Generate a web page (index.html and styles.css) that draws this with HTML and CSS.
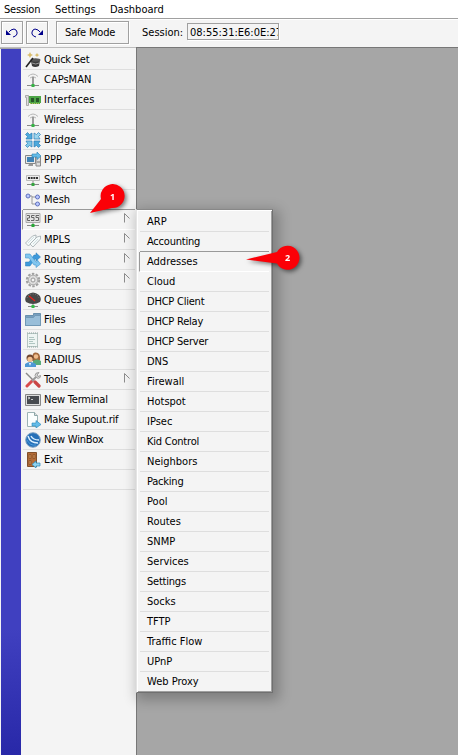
FILE: index.html
```
<!DOCTYPE html>
<html lang="en">
<head>
<meta charset="utf-8">
<title>WinBox</title>
<link rel="stylesheet" href="styles.css">
</head>
<body>
<nav class="menubar"><span class="m1 tight">Session</span><span class="m2">Settings</span><span class="m3">Dashboard</span></nav>
<header class="toolbar">
  <button class="btn sq"><svg width="12" height="10" viewBox="0 0 12 10"><path d="M0 2v5h5z" fill="#00008b"/><path d="M3 4l2-2 3-1 2 1 1 2v2L9.500 8 7 9" class="arrow"/></svg></button>
  <button class="btn sq"><svg class="flip" width="12" height="10" viewBox="0 0 12 10"><path d="M0 2v5h5z" fill="#00008b"/><path d="M3 4l2-2 3-1 2 1 1 2v2L9.500 8 7 9" class="arrow"/></svg></button>
  <button class="btn safe tight">Safe Mode</button>
  <label class="lbl">Session:</label>
  <div class="field">08:55:31:E6:0E:27</div>
</header>
<main class="work">
  <div class="rail"></div>
  <ul class="side">
    <li><svg class="ic" viewBox="0 0 16 16"><path d="M6 9l9-1-1 6q-4 2-7 0z" fill="#3a3a3a"/><ellipse cx="10.500" cy="8" rx="5" ry="1.700" fill="#555"/><path d="M7 11q4 2 7 0" stroke="#999" fill="none"/><path d="M1 15l7-9" stroke="#222" stroke-width="1.600"/><path d="M5 0l1 2 2 1-2 1-1 2-1-2-2-1 2-1zM12 1l1 1.500 1.500.5-1.500.7-1 1.300-1-1.300L9.500 3l1.500-.5z" fill="#d9bd6c"/></svg><span class="tight">Quick Set</span></li>
    <li><svg class="ic" viewBox="0 0 16 16"><use href="#antenna"/></svg><span>CAPsMAN</span></li>
    <li><svg class="ic" viewBox="0 0 16 16"><path d="M.5 3.500h3v10h-2v-8h-1z" fill="#ddd" stroke="#999" stroke-width=".8"/><path d="M4 4h12v7h-1v1H5v-1H4z" fill="#4ea647"/><path d="M6 6h3v4H6zM11 6h3v4h-3z" fill="#28572a"/><path d="M5 11.500h10" stroke="#b9bd5b" stroke-dasharray="1 1"/></svg><span class="wide">Interfaces</span></li>
    <li><svg class="ic" viewBox="0 0 16 16"><use href="#antenna"/></svg><span class="tight">Wireless</span></li>
    <li><svg class="ic" viewBox="0 0 16 16"><g stroke="#2c7cb4" stroke-width=".7" fill="#4da9dc"><path d="M.5 2.500l2-2 2 2L7 1v6H1l1.500-2.500z"/><path d="M15.500 2.500l-2-2-2 2L9 1v6h6l-1.500-2.500z" fill="#9bd6ef"/><path d="M.5 13.500l2 2 2-2L7 15V9H1l1.500 2.500z" fill="#7fc7e8"/><path d="M15.500 13.500l-2 2-2-2L9 15V9h6l-1.500 2.500z"/></g></svg><span>Bridge</span></li>
    <li><svg class="ic" viewBox="0 0 16 16"><path d="M11 4.500h4.500v9.500H11z" fill="#ddd" stroke="#888"/><path d="M.5 3.500h10v8H.5z" fill="#e8e8e8" stroke="#888"/><path d="M2 5h7v5H2z" fill="#3e82b5"/><path d="M4 12h4v2H3z" fill="#999"/><path d="M7 2h5V0l4 4-4 3.500V5H7z" fill="#65bce8" stroke="#2380b4" stroke-width=".6"/><path d="M12 10h3" stroke="#777"/></svg><span>PPP</span></li>
    <li><svg class="ic" viewBox="0 0 16 16"><path d="M1.500 3.500h13v5h-13z" fill="#eee" stroke="#bbb"/><path d="M3 6h10" stroke="#333" stroke-width="2" stroke-dasharray="2 .67"/><path d="M8 9v3M2 12.500h12" stroke="#888"/><path d="M6.500 11h3v3h-3z" fill="#35a540"/></svg><span>Switch</span></li>
    <li><svg class="ic" viewBox="0 0 16 16"><path d="M5 4h2v8h4M7 5h4" stroke="#999" fill="none"/><g fill="#bac9ff" stroke="#6070bd"><circle cx="3" cy="4" r="2"/><circle cx="12.500" cy="5" r="2"/><circle cx="12.500" cy="12" r="2"/></g></svg><span>Mesh</span></li>
    <li class="active"><svg class="ic" viewBox="0 0 16 16"><path d="M1 1.500h14v9H1z" fill="#e4e4e4" stroke="#aaa"/><path d="M2 3.500h2.500V6h-2v2.500H5M9.500 3.500h-3v2h2.500v3H6M14 3.500h-3v2h2.500v3h-3" fill="none" stroke="#666"/><path d="M8 11v2M2 13.500h12" stroke="#888"/><path d="M6.500 12h3v3h-3z" fill="#27a936"/></svg><span>IP</span><svg class="sub"><use href="#tri"/></svg></li>
    <li><svg class="ic" viewBox="0 0 16 16"><g fill="#f5fafa" stroke="#9faaad" stroke-width=".8"><path d="M.5 11l7-7 3.500-1v3l-7.500 8z"/><path d="M5 12l7-7 3.500-1v3L8 15z"/></g><path d="M3 11l6-6M8 12l5-5" stroke="#d0dfe2"/></svg><span>MPLS</span><svg class="sub"><use href="#tri"/></svg></li>
    <li><svg class="ic" viewBox="0 0 16 16"><path d="M.5 10H4l5-7h2V.8L15.500 5 11 9V7h-1l-5 7H.5z" fill="#3e99da" stroke="#2478b4" stroke-width=".5"/><path d="M.5 2H5l6 8h1V7.500l3.500 4.500-4.500 3.500V13H9L4 6H.5z" fill="#82c6ef" stroke="#3f94cc" stroke-width=".6"/></svg><span>Routing</span><svg class="sub"><use href="#tri"/></svg></li>
    <li><svg class="ic" viewBox="0 0 16 16"><circle cx="8" cy="8" r="6.200" fill="none" stroke="#a0a0a0" stroke-width="2" stroke-dasharray="2.500 1.400"/><circle cx="8" cy="8" r="4.800" fill="#ddd" stroke="#aaa"/><circle cx="8" cy="8" r="2" fill="#f4f4f4" stroke="#999"/></svg><span>System</span><svg class="sub"><use href="#tri"/></svg></li>
    <li><svg class="ic" viewBox="0 0 16 16"><path d="M1 10Q-1 6 2 3q6-5 12 0 3 3 1 7-7 4-14 0z" fill="#484848"/><path d="M2 6l1-2 3-2h4l3 2 1 2" fill="none" stroke="#777" stroke-dasharray="1 1.500"/><path d="M4 4l6 5" stroke="#e62018" stroke-width="1.200"/><path d="M8 12v2M3 14.500h10" stroke="#888"/><path d="M6.500 13h3v3h-3z" fill="#36bd48"/></svg><span>Queues</span></li>
    <li><svg class="ic" viewBox="0 0 16 16"><path d="M.5 3.500h8v-2h7v12H.5z" fill="#779fc0" stroke="#6990ad"/><path d="M.5 5.500h8l1.500-2h5.500v10H.5z" fill="#99bed9" stroke="#7198b5"/></svg><span>Files</span></li>
    <li><svg class="ic" viewBox="0 0 16 16"><path d="M2.500 1.500h10v13h-10z" fill="#eef5f3" stroke="#b5c5c2"/><path d="M2 1h11M2 15h11" stroke="#90a5a1" stroke-dasharray="1 1"/><path d="M4 5.500h5M4 7.500h6M4 9.500h4M4 11.500h6" stroke="#afc5c1"/></svg><span>Log</span></li>
    <li><svg class="ic" viewBox="0 0 16 16"><path d="M8 10Q6 1 10 .5q6-.5 5 8z" fill="#a3693e"/><path d="M8 13V9q4-3 8 0v4z" fill="#58ac7a"/><circle cx="11" cy="4.500" r="2.200" fill="#f0bd8d"/><circle cx="5" cy="6" r="3.500" fill="#704731"/><circle cx="5" cy="7.300" r="2.600" fill="#f2bf91"/><path d="M0 15v-3q5-4 11 0v3z" fill="#4e98d5"/><path d="M4 11l1 3 1-3" fill="#fff"/></svg><span>RADIUS</span></li>
    <li><svg class="ic" viewBox="0 0 16 16"><path d="M1 1l8 8" stroke="#888" stroke-width="1.500"/><path d="M10 10l4 4" stroke="#c94444" stroke-width="3.200" stroke-linecap="round"/><path d="M2 14l5-5" stroke="#d94b4b" stroke-width="3" stroke-linecap="round"/><path d="M7 9l4-4" stroke="#999" stroke-width="2"/><path d="M10 3.500Q10 .5 14 .5l-2 2.500 1 1.500 2.500-1Q15.500 7 12 6z" fill="#ddd" stroke="#888" stroke-width=".8"/></svg><span>Tools</span><svg class="sub"><use href="#tri"/></svg></li>
    <li><svg class="ic" viewBox="0 0 16 16"><path d="M.5 2.500h15v11H.5z" fill="#ddd" stroke="#888"/><path d="M2 4h12v8H2z" fill="#484b50"/><path d="M3 5l2 1-2 1M6 7.500h2" stroke="#eee" stroke-width=".8" fill="none"/></svg><span class="tight">New Terminal</span></li>
    <li><svg class="ic" viewBox="0 0 16 16"><path d="M2.500.5h7l3 3v11h-10z" fill="#fbfefe" stroke="#9cb3b5"/><path d="M9.500.5v3h3" fill="#ddd" stroke="#8ba5a7"/><path d="M7 11h4V8.500l5 4-5 3.500v-2H7z" fill="#65bde9" stroke="#2587bb" stroke-width=".6"/></svg><span class="tight">Make Supout.rif</span></li>
    <li><svg class="ic" viewBox="0 0 16 16"><circle cx="8" cy="8" r="7.300" fill="#2670b8" stroke="#7ca1c4"/><path d="M3 4q2 7 10 7M6 4q2 4 8 4" fill="none" stroke="#dcf0ff" stroke-width="1.400"/><path d="M2 8q3 6 9 5" stroke="#4b9cdd" fill="none"/></svg><span class="tight">New WinBox</span></li>
    <li><svg class="ic" viewBox="0 0 16 16"><path d="M2.500.5h9v14h-9z" fill="#b36b38" stroke="#81502b"/><path d="M4 2.500h2v4H4zM8 2.500h2v4H8zM4 8.500h2v4H4z" fill="#c98c57" stroke="#8c5429" stroke-width=".8"/><path d="M15 11h-4V9l-4 3.500 4 3.500v-2h4z" fill="#8ed2ef" stroke="#2587bb" stroke-width=".7"/></svg><span>Exit</span></li>
    <li></li>
  </ul>
  <ul class="popup">
    <li>ARP</li><li class="tight">Accounting</li><li class="hot">Addresses</li><li>Cloud</li><li class="tight">DHCP Client</li><li class="tight">DHCP Relay</li><li class="tight">DHCP Server</li><li>DNS</li><li>Firewall</li><li>Hotspot</li><li>IPsec</li><li class="tight">Kid Control</li><li>Neighbors</li><li class="tight">Packing</li><li>Pool</li><li>Routes</li><li>SNMP</li><li>Services</li><li class="tight">Settings</li><li>Socks</li><li>TFTP</li><li>Traffic Flow</li><li>UPnP</li><li>Web Proxy</li>
  </ul>
</main>
<svg class="pin one" width="40" height="36" viewBox="0 0 40 36"><path d="M0 31L11 17A12 12 0 1 1 22 26z"/><text x="22.500" y="17.500">1</text></svg>
<svg class="pin two" width="56" height="30" viewBox="0 0 56 30"><path d="M0 15.500L31 8A12 12 0 1 1 31 19.500z"/><text x="41.500" y="17">2</text></svg>
<svg class="defs"><defs><g id="antenna"><path d="M3 4.500q5-5 10 0M5 6q3-3 6 0" fill="none" stroke="#b8b8b8"/><path d="M8 5v8" stroke="#888" stroke-width="1.600"/><path d="M2 13.500h12" stroke="#888"/><path d="M6.500 12h3v3h-3z" fill="#35b344"/></g><path id="tri" d="M1.500 9.500v-9l5 5" fill="none" stroke="#8c8c8c"/></defs></svg>
</body>
</html>
```
FILE: styles.css
```
* { box-sizing: border-box; }
body { margin: 0; width: 458px; height: 755px; overflow: hidden; position: relative; background: #f4f4f4; color: #000; font: 11px/20px "DejaVu Sans Condensed", "DejaVu Sans", sans-serif; font-stretch: condensed; }
ul { list-style: none; margin: 0; padding: 0; }
.tight { letter-spacing: -.22px; }
.wide { letter-spacing: .1px; }
.menubar { height: 19px; background: #fff; border-bottom: 1px solid #a0a0a0; display: flex; padding-left: 4px; white-space: nowrap; }
.m1 { width: 51px; }
.m2 { width: 55px; }
.toolbar { height: 29px; background: linear-gradient(90deg, #bdbdbd 136px, #777 136px) 0 100% / 100% 1px no-repeat #f4f4f4; border-top: 1px solid #fff; display: flex; align-items: flex-start; padding: 1px 0 0 1px; }
.btn { font: inherit; height: 23px; padding: 0; background: #f4f4f4; border: 1px solid #a0a0a0; box-shadow: inset 1px 1px #fff, 1px 1px #fff; display: flex; align-items: center; justify-content: center; color: #000; }
.sq { width: 22px; margin-right: 3px; }
.safe { width: 73px; margin-left: 5px; padding-right: 5px; }
.safe.tight { letter-spacing: -.2px; }
.arrow { fill: none; stroke: #00008b; }
.flip { transform: scaleX(-1); }
.lbl { margin: 2px 0 0 13px; width: 45px; white-space: nowrap; }
.field { width: 92px; height: 17px; margin-top: 2px; padding: 0 2px; border: 1px solid #a0a0a0; box-shadow: 1px 1px #fff; line-height: 17px; overflow: hidden; white-space: nowrap; }
.work { display: flex; height: 707px; background: #a6a6a6; }
.rail { width: 21px; margin-top: 1px; border-left: 1px solid #f4f4f4; background: linear-gradient(#4040c0 0, #4040c0 580px, #2828a8 706px); }
.side { width: 116px; background: #f4f4f4; padding: 2px 1px 0 1px; border-right: 1px solid #777; }
.side li { height: 20px; display: flex; align-items: center; position: relative; border-bottom: 1px solid #dedede; margin-left: 1px; white-space: nowrap; }
.side li:nth-child(8) { border-bottom-color: #999; }
.side .active { border-left: 1px solid #999; margin-left: 0; border-bottom-color: #fff; }
.side span { margin-left: 3px; line-height: 19px; }
.ic { width: 16px; height: 16px; margin-left: 2px; flex: none; }
.sub { width: 8px; height: 11px; margin: 0 4px 3px auto; }
.popup { width: 137px; height: 484px; margin: 161px 0 0 -1px; background: #f4f4f4; border: 1px solid; border-color: #888 #707070 #707070 #e4e4e4; box-shadow: inset 1px 1px #fff, inset -1px -1px #a0a0a0, 3px 4px 12px 3px rgba(0,0,0,.24); padding: 2px 3px 0 3px; z-index: 1; }
.popup li { height: 20px; border-bottom: 1px solid #dedede; padding-left: 7px; line-height: 20px; }
.popup li:nth-child(2) { border-bottom-color: #999; }
.popup .hot { border-left: 1px solid #999; margin-left: -1px; border-bottom-color: #fff; }
.popup li:last-child { border: 0; }
.pin { position: absolute; z-index: 2; overflow: visible; filter: drop-shadow(2px 2px 2px rgba(0,0,0,.5)); }
.pin path { fill: #fb0007; }
.pin text { fill: #fff; font: bold 9px "Open Sans", sans-serif; text-anchor: middle; }
.one { left: 90px; top: 182px; }
.two { left: 246px; top: 244px; }
.defs { position: absolute; width: 0; height: 0; }
```
